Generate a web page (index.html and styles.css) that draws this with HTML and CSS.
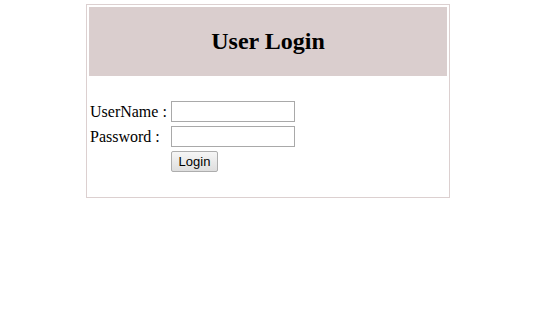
FILE: index.html
```html
<!DOCTYPE html>
<html lang="en">
<head>
  <meta charset="UTF-8" />
  <title>User Login</title>
  <link rel="stylesheet" href="styles.css">
</head>
<body>

  <div class="login-box">
    <div class="login-head">
      <h2>User Login</h2>
    </div>

    <form class="login-form">
      <label for="user">UserName :</label>
      <input type="text" id="user" class="field" />
      <label for="pass">Password :</label>
      <input type="password" id="pass" class="field" />
      <span></span>
      <button type="submit" class="btn">Login</button>
    </form>
  </div>

</body>
</html>
```
FILE: styles.css
```css
* {
  box-sizing: border-box;
}

body {
  margin: 0;
  font-family: "Liberation Serif", "Times New Roman", serif;
  font-size: 16px;
  color: #000;
  background: #fff;
}

.login-box {
  width: 364px;
  margin: 4px 0 0 86px;
  padding: 2px;
  border: 1px solid #dcd0d0;
}

.login-head {
  height: 69px;
  background: #dacece;
  display: flex;
  align-items: center;
  justify-content: center;
}

.login-head h2 {
  margin: 0;
  font-size: 24px;
  font-weight: bold;
}

.login-form {
  display: grid;
  grid-template-columns: 81px 124px;
  row-gap: 4px;
  align-items: center;
  padding: 25px 0 23px 1px;
}

.login-form label {
  line-height: 21px;
}

.field {
  width: 124px;
  height: 21px;
  margin: 0;
  padding: 1px 2px;
  border: 1px solid #a9a9a9;
  font-family: "Liberation Sans", Arial, sans-serif;
  font-size: 13px;
}

.btn {
  justify-self: start;
  width: 47px;
  height: 21px;
  margin: 0;
  padding: 0;
  border: 1px solid #adadad;
  border-radius: 2px;
  background: linear-gradient(#f6f6f6, #dedede);
  font-family: "Liberation Sans", Arial, sans-serif;
  font-size: 13px;
  color: #000;
}
```
